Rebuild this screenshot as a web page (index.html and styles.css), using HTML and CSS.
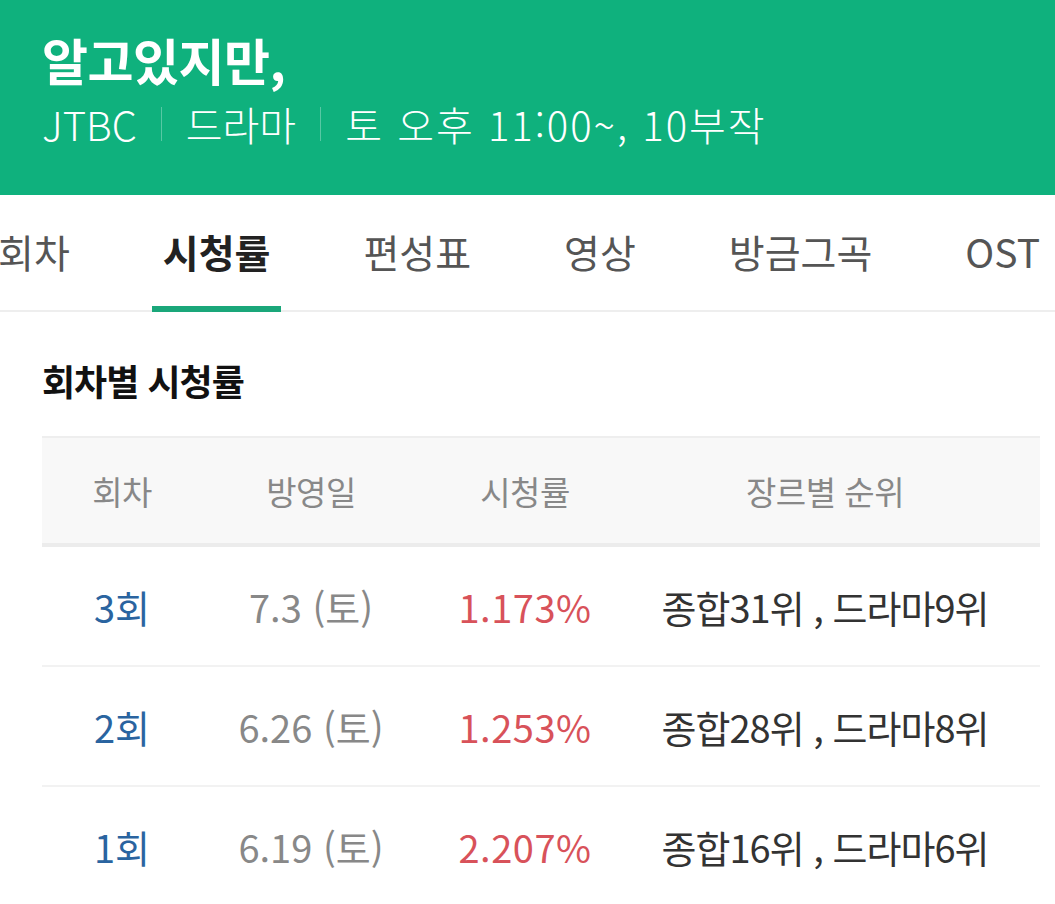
FILE: index.html
```html
<!DOCTYPE html>
<html lang="ko">
<head>
  <meta charset="UTF-8" />
  <meta name="viewport" content="width=device-width, initial-scale=1.0"/>
  <title>알고있지만, 시청률</title>
  <link rel="stylesheet" href="styles.css">
</head>
<body>
  <header class="program-header">
    <h1>알고있지만,</h1>
    <p class="program-info">
      <span>JTBC</span>
      <span class="divider"></span>
      <span>드라마</span>
      <span class="divider"></span>
      <span class="schedule">토 오후 11:00~, 10부작</span>
    </p>
  </header>

  <nav class="tabs">
    <a class="tab first">회차</a>
    <a class="tab active">시청률</a>
    <a class="tab">편성표</a>
    <a class="tab">영상</a>
    <a class="tab">방금그곡</a>
    <a class="tab">OST</a>
  </nav>

  <section class="ratings">
    <h2>회차별 시청률</h2>
    <div class="rating-table">
      <div class="row head">
        <span>회차</span>
        <span>방영일</span>
        <span>시청률</span>
        <span>장르별 순위</span>
      </div>
      <div class="row">
        <span class="episode">3회</span>
        <span class="date">7.3 (토)</span>
        <span class="rate">1.173%</span>
        <span class="rank">종합31위 , 드라마9위</span>
      </div>
      <div class="row">
        <span class="episode">2회</span>
        <span class="date">6.26 (토)</span>
        <span class="rate">1.253%</span>
        <span class="rank">종합28위 , 드라마8위</span>
      </div>
      <div class="row">
        <span class="episode">1회</span>
        <span class="date">6.19 (토)</span>
        <span class="rate">2.207%</span>
        <span class="rank">종합16위 , 드라마6위</span>
      </div>
    </div>
  </section>
</body>
</html>
```

FILE: styles.css
```css
:root {
  --green: #0fb17d;
  --blue: #2a64a0;
  --red: #d8525a;
  --text: #333;
  --muted: #888;
  --line: #eeeeee;
}

body {
  margin: 0;
  font-family: "Noto Sans CJK KR", "Noto Sans", sans-serif;
  background: #fff;
  color: var(--text);
  overflow: hidden;
}

.program-header {
  background: var(--green);
  color: #fff;
  height: 195px;
  padding: 22px 42px 0;
  box-sizing: border-box;
}

.program-header h1 {
  margin: 0;
  font-size: 50px;
  font-weight: 700;
  line-height: 74px;
  letter-spacing: -0.5px;
}

.program-info {
  margin: 0;
  display: flex;
  align-items: center;
  font-size: 40px;
  font-weight: 300;
  line-height: 56px;
}

.schedule {
  letter-spacing: 2px;
}

.divider {
  width: 1px;
  height: 34px;
  margin: 0 24px;
  background: rgba(255, 255, 255, 0.3);
}

.tabs {
  display: flex;
  gap: 71px;
  height: 117px;
  border-bottom: 2px solid var(--line);
  box-sizing: border-box;
  white-space: nowrap;
}

.tab {
  display: flex;
  align-items: center;
  padding: 0 11px;
  font-size: 39px;
  color: #555;
  border-bottom: 6px solid transparent;
  margin-bottom: -2px;
}

.tab.first {
  padding-left: 0;
  margin-left: -2px;
}

.tab.active {
  color: #222;
  font-weight: 700;
  border-bottom-color: #1aa77a;
}

.ratings {
  padding: 0 15px 0 42px;
}

.ratings h2 {
  margin: 0;
  padding: 42px 0 30px;
  font-size: 36px;
  font-weight: 700;
  letter-spacing: -1px;
  color: #111;
  line-height: 52px;
}

.row {
  display: grid;
  grid-template-columns: 160px 218px 210px 390px;
  align-items: center;
  height: 118px;
  border-bottom: 2px solid #f2f2f2;
  font-size: 38px;
  text-align: center;
}

.row.head {
  height: 111px;
  background: #f8f8f8;
  border-top: 2px solid #eeeeee;
  border-bottom: 4px solid #ececec;
  font-size: 33px;
  letter-spacing: -0.5px;
  color: var(--muted);
  box-sizing: border-box;
}

.episode {
  color: var(--blue);
}

.date {
  color: var(--muted);
}

.rate {
  color: var(--red);
  letter-spacing: 0.5px;
}

.rank {
  color: var(--text);
  letter-spacing: -1px;
}
```
